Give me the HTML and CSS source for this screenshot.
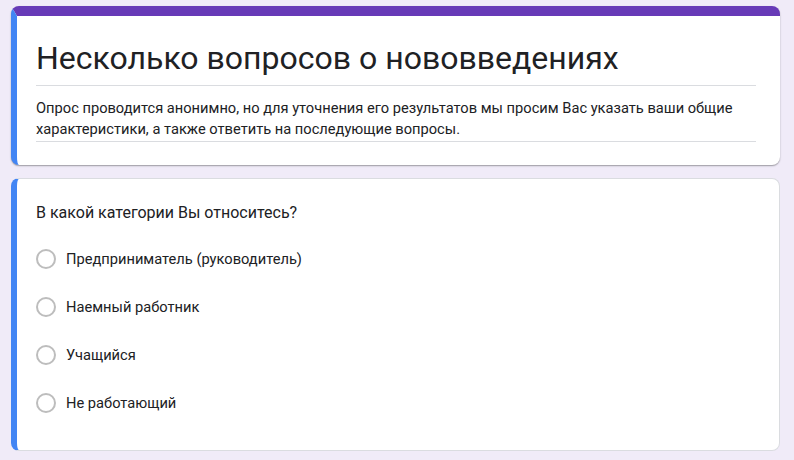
FILE: index.html
```html
<!DOCTYPE html>
<html lang="ru">
<head>
<meta charset="utf-8">
<title>Несколько вопросов о нововведениях</title>
<link rel="stylesheet" href="styles.css">
</head>
<body>
<main class="form">
  <section class="card header-card">
    <div class="header-body">
      <h1 class="title">Несколько вопросов о нововведениях</h1>
      <p class="desc">Опрос проводится анонимно, но для уточнения его результатов мы просим Вас указать ваши общие характеристики, а также ответить на последующие вопросы.</p>
    </div>
  </section>
  <section class="card question-card">
    <div class="question">В какой категории Вы относитесь?</div>
    <ul class="options">
      <li class="option"><span class="radio"></span><span class="label">Предприниматель (руководитель)</span></li>
      <li class="option"><span class="radio"></span><span class="label">Наемный работник</span></li>
      <li class="option"><span class="radio"></span><span class="label">Учащийся</span></li>
      <li class="option"><span class="radio"></span><span class="label">Не работающий</span></li>
    </ul>
  </section>
</main>
</body>
</html>
```

FILE: styles.css
```css
* { box-sizing: border-box; }
html, body { margin: 0; padding: 0; }
body {
  background: #f0ebf8;
  font-family: Roboto, "Liberation Sans", Arial, sans-serif;
  color: #202124;
  height: 460px;
  overflow: hidden;
}
.form {
  width: 769px;
  margin-left: 11px;
  padding-top: 6px;
  display: flex;
  flex-direction: column;
  gap: 13px;
}
.card {
  background: #fff;
  border-radius: 8px;
  border-left: 6px solid #4285f4;
}
.header-card {
  border-top: 10px solid #673ab7;
  box-shadow: 0 1px 1px 0 rgba(0,0,0,.16), 0 1px 2px 0 rgba(0,0,0,.22);
  padding: 22px 24px 23px 19px;
}
.title {
  margin: 0;
  font-size: 32px;
  font-weight: 400;
  line-height: 40px;
  padding-bottom: 7px;
  border-bottom: 1px solid #dadce0;
  letter-spacing: 0;
}
.desc {
  margin: 0;
  padding-top: 12px;
  font-size: 14.67px;
  line-height: 21px;
  padding-bottom: 1px;
  border-bottom: 1px solid #dadce0;
}
.question-card {
  border-top: 1px solid #dadce0;
  border-right: 1px solid #dadce0;
  border-bottom: 1px solid #dadce0;
  padding: 22px 24px 23px 19px;
}
.question {
  font-size: 16px;
  line-height: 24px;
  margin-bottom: 10px;
}
.options {
  list-style: none;
  margin: 0;
  padding: 0;
  display: flex;
  flex-direction: column;
}
.option {
  height: 48px;
  display: flex;
  align-items: center;
  gap: 10px;
}
.radio {
  width: 20px;
  height: 20px;
  border: 2px solid #bdbdbd;
  border-radius: 50%;
  flex: none;
}
.label {
  font-size: 14.67px;
  line-height: 20px;
}
```
